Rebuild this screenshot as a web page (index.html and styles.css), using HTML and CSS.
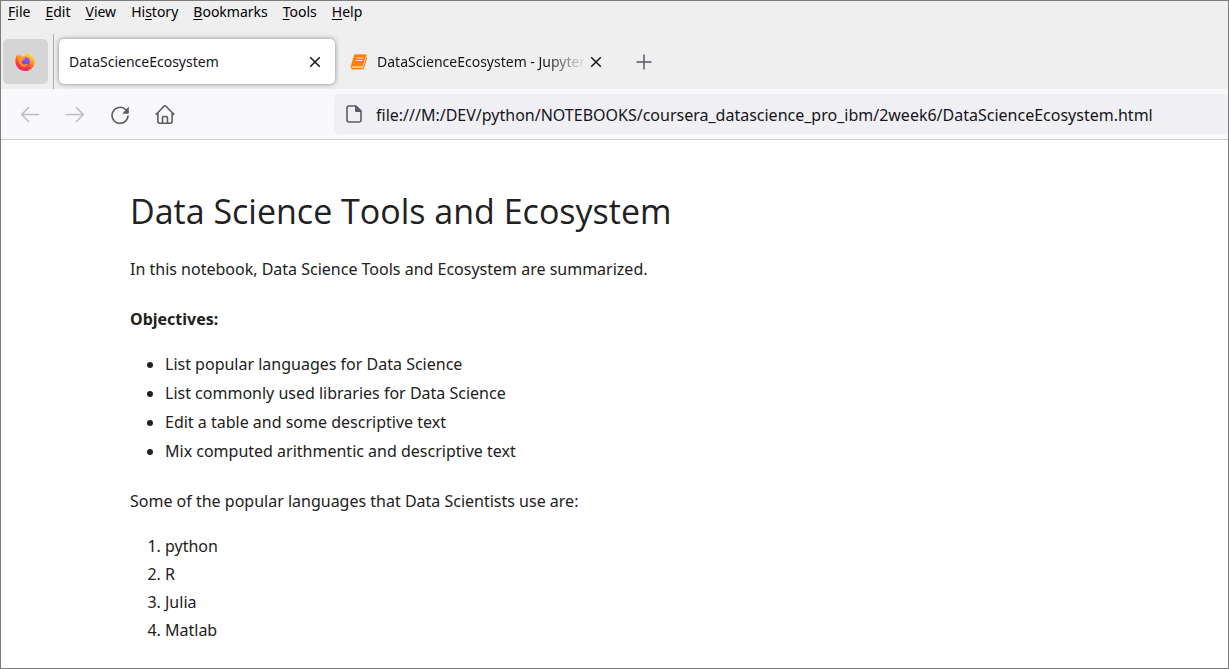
FILE: index.html
```html
<!DOCTYPE html>
<html lang="en">
<head>
<meta charset="utf-8">
<meta name="viewport" content="width=device-width, initial-scale=1">
<title>DataScienceEcosystem</title>
<link rel="stylesheet" href="styles.css">
</head>
<body>
<div class="window">
  <nav class="menu-bar" aria-label="Menu bar">
    <button type="button"><u>F</u>ile</button>
    <button type="button"><u>E</u>dit</button>
    <button type="button"><u>V</u>iew</button>
    <button type="button">Hi<u>s</u>tory</button>
    <button type="button"><u>B</u>ookmarks</button>
    <button type="button"><u>T</u>ools</button>
    <button type="button"><u>H</u>elp</button>
  </nav>

  <div class="tab-strip">
    <div class="pinned">
      <button type="button" class="pinned-tab" aria-label="Firefox View">
        <svg width="22" height="20" viewBox="0 0 22 20" aria-hidden="true">
          <defs>
            <linearGradient id="flame" x1="0.8" y1="0" x2="0.3" y2="1">
              <stop offset="0" stop-color="#fff03f"/>
              <stop offset="0.4" stop-color="#ff9a22"/>
              <stop offset="0.7" stop-color="#ff4438"/>
              <stop offset="1" stop-color="#f0197a"/>
            </linearGradient>
            <linearGradient id="globe" x1="0.7" y1="0" x2="0.4" y2="1">
              <stop offset="0" stop-color="#a55bea"/>
              <stop offset="1" stop-color="#5a48c8"/>
            </linearGradient>
          </defs>
          <path fill="url(#flame)" d="M18.900 6.800c-.4-1-1.300-2.100-2-2.500.5 1 .8 1.900.9 2.600C16.700 4.200 14.900 3.100 13.400 1c-.2-.4-.4-.7-.4-1-1.900 1.100-2.600 3.100-2.700 4.100-.9 0-1.800.3-2.500.7-.8-.3-1.300-.5-1.600-.8-.8-.6-1.100-1.100-1.100-1.600C4 2.600 3.200 3.600 3 4.200 2.500 3.600 2.500 2.600 2.600 2 1.200 3.400.2 6.300.4 10.100c.4 5 4.500 9 9.600 9a9.600 9.600 0 0 0 9.600-9.200c.1-1.100-.2-2.200-.7-3.100z"/>
          <circle cx="10.300" cy="9.600" r="4.600" fill="url(#globe)"/>
          <path fill="#ff9827" d="M3 4.800c1.500-.5 3.100-.3 4.300.5 1.100.1 2.500.1 3.300.3-.4 1.500-2 1.500-2.500 2.200-.2 1-.9 1.300-1.400 1.900.2 2 1.900 3.300 3.700 2.700 1-.4 1.700-.6 2.400-.1-1.200 2-3.500 2.900-5.600 2C4.700 13.300 3 9.100 3 4.800z"/>
        </svg>
      </button>
    </div>
    <div class="tab tab-active">
      <span class="tab-title">DataScienceEcosystem</span>
      <button type="button" class="tab-close" aria-label="Close tab">
        <svg width="12" height="12" viewBox="0 0 12 12" aria-hidden="true"><path d="M1.200 1.200l9.600 9.600M10.800 1.200l-9.600 9.600"/></svg>
      </button>
    </div>
    <div class="tab">
      <svg class="tab-icon" width="18" height="18" viewBox="0 0 18 18" aria-hidden="true">
        <path fill="#ffc48a" d="M5 1h11.500l1 1.500-3.500 13-1.500 1.500H2L.5 15.500l.4-3.500L3.700 2z"/>
        <path fill="#ff8000" d="M5.500 1.500H15q1.200 0 .9 1.200l-3 9.300q-.3 1-1.400 1H2.900q-1 0-.8 1 .2.900 1.200.9H13l3.700-11q.6.500.3 1.500l-3 9.600q-.3 1-1.500 1H3Q1 16 1 14l.3-2.200L4.200 2.500q.3-1 1.300-1z"/>
        <path fill="none" stroke="#ffe2bf" stroke-width="1.200" d="M6.500 5h6.700M5.700 7.500h6.700"/>
      </svg>
      <span class="tab-title tab-title-faded">DataScienceEcosystem - Jupyter</span>
      <button type="button" class="tab-close" aria-label="Close tab">
        <svg width="12" height="12" viewBox="0 0 12 12" aria-hidden="true"><path d="M1.200 1.200l9.600 9.600M10.800 1.200l-9.600 9.600"/></svg>
      </button>
    </div>
    <button type="button" class="new-tab" aria-label="New tab">
      <svg width="16" height="16" viewBox="0 0 16 16" aria-hidden="true"><path d="M8 .5v15M.5 8h15"/></svg>
    </button>
  </div>

  <div class="toolbar">
    <div class="nav-buttons">
      <button type="button" disabled aria-label="Back">
        <svg width="20" height="20" viewBox="0 0 20 20" aria-hidden="true"><path d="M18.500 10.500H2M8.500 3.500l-6.800 7 6.800 7"/></svg>
      </button>
      <button type="button" disabled aria-label="Forward">
        <svg width="20" height="20" viewBox="0 0 20 20" aria-hidden="true"><path d="M1.500 10.500H18M11.500 3.500l6.800 7-6.800 7"/></svg>
      </button>
      <button type="button" aria-label="Reload">
        <svg width="20" height="20" viewBox="0 0 20 20" aria-hidden="true"><path d="M15.500 5.500A8 8 0 1 0 18 12"/><path class="solid" d="M18.800 2.500v6.600q0 .6-.6.6h-6z"/></svg>
      </button>
      <button type="button" aria-label="Home">
        <svg width="20" height="20" viewBox="0 0 20 20" aria-hidden="true"><path d="M1.200 10.300L9 2.200q1-.9 2 0l7.800 8.100M2.900 9v8.300q0 1.900 1.900 1.900h10.400q1.900 0 1.900-1.900V9M7.500 19v-5q0-1.500 1.500-1.500h2q1.500 0 1.500 1.500v5"/></svg>
      </button>
    </div>
    <div class="address">
      <svg width="16" height="18" viewBox="0 0 16 18" aria-hidden="true"><path d="M3 1h7l5 5v9q0 2-2 2H3q-2 0-2-2V3q0-2 2-2z"/><path class="solid" d="M9 1h1.500L15 5.500V7h-4.500Q9 7 9 5.500z"/></svg>
      <input type="text" aria-label="Address" value="file:///M:/DEV/python/NOTEBOOKS/coursera_datascience_pro_ibm/2week6/DataScienceEcosystem.html">
    </div>
  </div>

  <main class="notebook">
    <h1>Data Science Tools and Ecosystem</h1>
    <p>In this notebook, Data Science Tools and Ecosystem are summarized.</p>
    <p><strong>Objectives:</strong></p>
    <ul>
      <li>List popular languages for Data Science</li>
      <li>List commonly used libraries for Data Science</li>
      <li>Edit a table and some descriptive text</li>
      <li>Mix computed arithmentic and descriptive text</li>
    </ul>
    <p>Some of the popular languages that Data Scientists use are:</p>
    <ol>
      <li>python</li>
      <li>R</li>
      <li>Julia</li>
      <li>Matlab</li>
    </ol>
  </main>
</div>
</body>
</html>
```
FILE: styles.css
```css
* {
  box-sizing: border-box;
}

body {
  margin: 0;
  font-family: "Noto Sans", "Open Sans", sans-serif;
  color: #212121;
  background: #fff;
}

button {
  display: flex;
  align-items: center;
  justify-content: center;
  padding: 0;
  border: 0;
  background: none;
  color: inherit;
  font: inherit;
}

svg {
  flex: none;
}

.window {
  min-height: 100vh;
  border: 1px solid #7c7c7c;
}

.menu-bar {
  display: flex;
  gap: 15px;
  padding: 1px 7px 12px;
  background: #efefef;
  color: #000;
  font-size: 14px;
  line-height: 20px;
}

.menu-bar button {
  display: block;
}

.menu-bar u {
  text-underline-offset: 2px;
}

.tab-strip {
  display: flex;
  align-items: center;
  height: 55px;
  background: #efefef;
  color: #15141a;
  font-size: 14px;
}

.pinned {
  display: flex;
  align-items: center;
  height: 100%;
  padding: 0 5px 0 2px;
  border-right: 1px solid #acacac;
}

.pinned-tab {
  width: 45px;
  height: 45px;
  border-radius: 5px;
  background: #d5d5d5;
}

.tab {
  display: flex;
  align-items: center;
  width: 276px;
  height: 45px;
  margin-left: 5px;
  padding: 0 10px;
  border-radius: 5px;
}

.tab-active {
  background: #fff;
  box-shadow: 0 0 5px rgba(0, 0, 0, 0.45);
}

.tab-icon {
  margin-right: 9px;
}

.tab-title {
  flex: 1;
  min-width: 0;
  overflow: hidden;
  white-space: nowrap;
}

.tab-title-faded {
  mask-image: linear-gradient(to left, transparent, #000 40px);
}

.tab-close {
  width: 20px;
  height: 20px;
}

.tab-close path {
  fill: none;
  stroke: #15141a;
  stroke-width: 1.5;
}

.new-tab {
  width: 36px;
  height: 36px;
  margin-left: 10px;
}

.new-tab path {
  fill: none;
  stroke: #5b5b66;
  stroke-width: 1.5;
}

.toolbar {
  display: flex;
  align-items: center;
  gap: 149px;
  padding: 5px 0;
  border-bottom: 1px solid #ccc;
  background: #f9f9fb;
}

.nav-buttons {
  display: flex;
  gap: 5px;
  padding-left: 9px;
}

.nav-buttons button {
  width: 40px;
  height: 40px;
}

.toolbar path {
  fill: none;
  stroke: #5b5b66;
  stroke-width: 1.6;
  stroke-linecap: round;
  stroke-linejoin: round;
}

.toolbar path.solid {
  fill: #5b5b66;
  stroke: none;
}

.toolbar button:disabled path {
  stroke: #bcbcc0;
}

.address {
  display: flex;
  flex: 1;
  align-items: center;
  gap: 14px;
  height: 40px;
  padding-left: 12px;
  border-radius: 5px 0 0 5px;
  background: #f0f0f4;
}

.address input {
  flex: 1;
  min-width: 0;
  padding: 2px 0 0;
  border: 0;
  outline: 0;
  background: none;
  color: #15141a;
  font: inherit;
  font-size: 16px;
}

.notebook {
  padding: 45px 129px 0;
  font-size: 16px;
  line-height: 28px;
}

.notebook h1 {
  margin: 0 0 18px;
  font-family: "Open Sans", "Noto Sans", sans-serif;
  font-size: 34px;
  font-weight: 400;
  line-height: 52px;
}

.notebook p {
  margin: 0 0 17px;
}

.notebook p + p {
  margin-top: 22px;
}

.notebook ul,
.notebook ol {
  margin: 17px 0 21px;
  padding-left: 35px;
}

.notebook ul {
  line-height: 29px;
}
```
